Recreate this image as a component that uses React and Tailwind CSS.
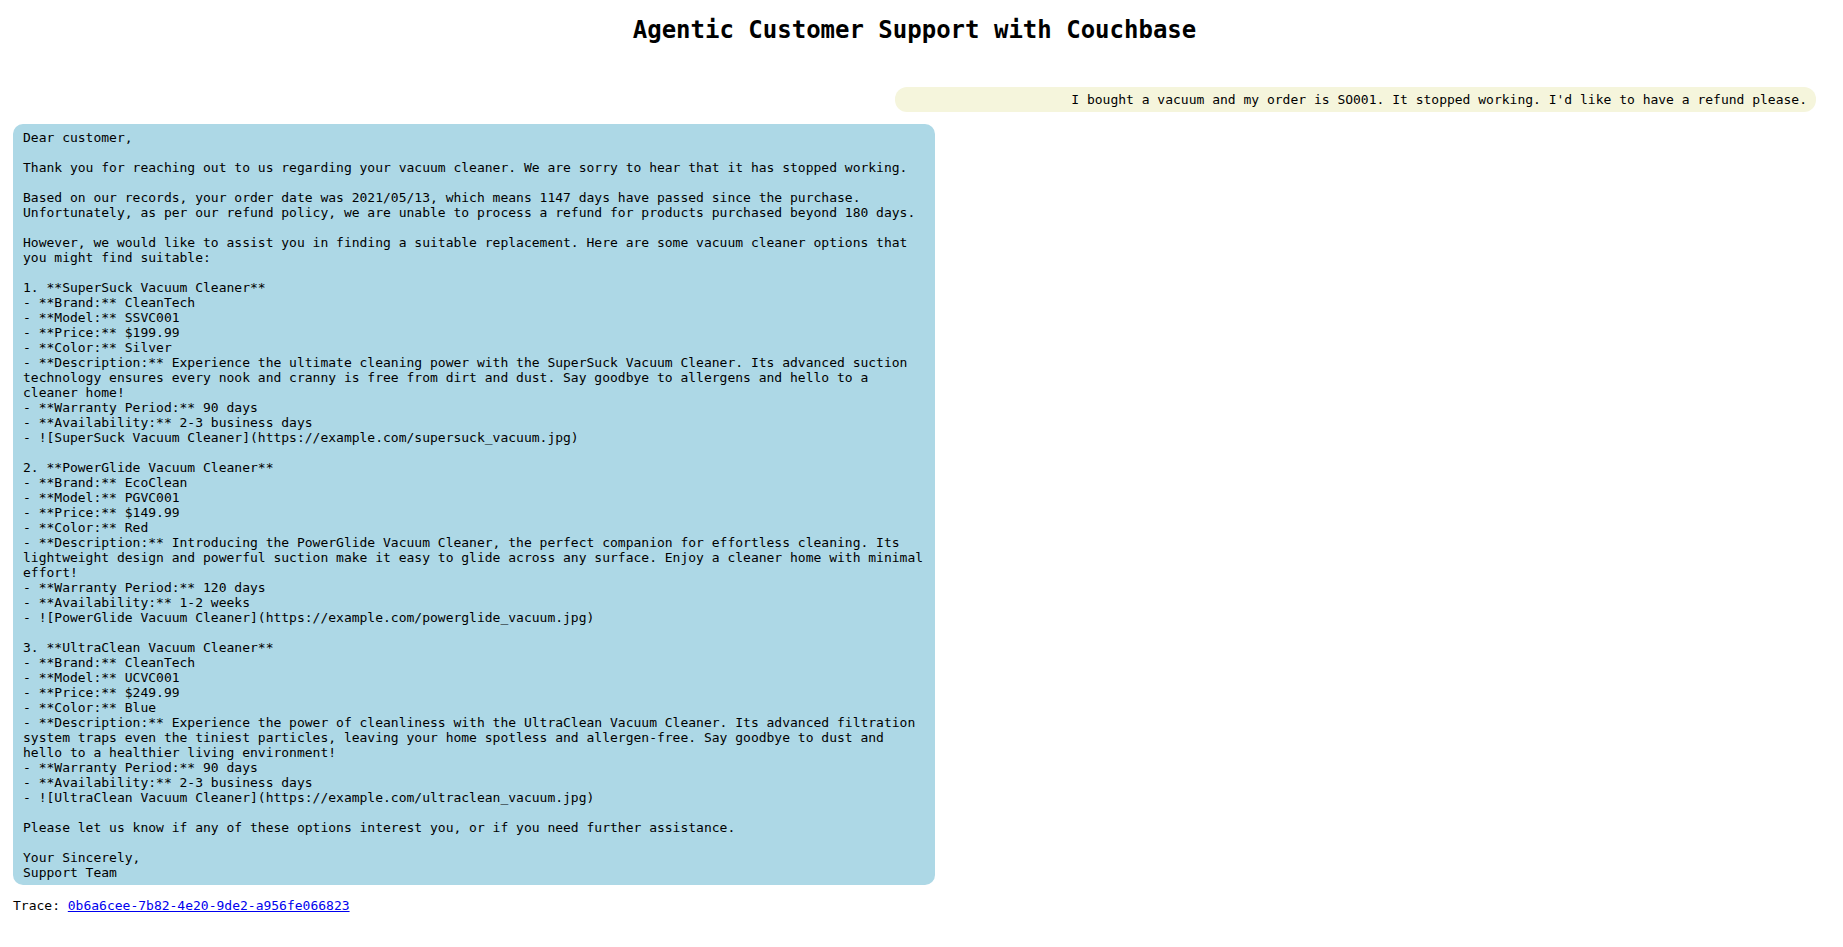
import React from "react";

const reply = `Dear customer,

Thank you for reaching out to us regarding your vacuum cleaner. We are sorry to hear that it has stopped working.

Based on our records, your order date was 2021/05/13, which means 1147 days have passed since the purchase.
Unfortunately, as per our refund policy, we are unable to process a refund for products purchased beyond 180 days.

However, we would like to assist you in finding a suitable replacement. Here are some vacuum cleaner options that
you might find suitable:

1. **SuperSuck Vacuum Cleaner**
- **Brand:** CleanTech
- **Model:** SSVC001
- **Price:** $199.99
- **Color:** Silver
- **Description:** Experience the ultimate cleaning power with the SuperSuck Vacuum Cleaner. Its advanced suction
technology ensures every nook and cranny is free from dirt and dust. Say goodbye to allergens and hello to a
cleaner home!
- **Warranty Period:** 90 days
- **Availability:** 2-3 business days
- ![SuperSuck Vacuum Cleaner](https://example.com/supersuck_vacuum.jpg)

2. **PowerGlide Vacuum Cleaner**
- **Brand:** EcoClean
- **Model:** PGVC001
- **Price:** $149.99
- **Color:** Red
- **Description:** Introducing the PowerGlide Vacuum Cleaner, the perfect companion for effortless cleaning. Its
lightweight design and powerful suction make it easy to glide across any surface. Enjoy a cleaner home with minimal
effort!
- **Warranty Period:** 120 days
- **Availability:** 1-2 weeks
- ![PowerGlide Vacuum Cleaner](https://example.com/powerglide_vacuum.jpg)

3. **UltraClean Vacuum Cleaner**
- **Brand:** CleanTech
- **Model:** UCVC001
- **Price:** $249.99
- **Color:** Blue
- **Description:** Experience the power of cleanliness with the UltraClean Vacuum Cleaner. Its advanced filtration
system traps even the tiniest particles, leaving your home spotless and allergen-free. Say goodbye to dust and
hello to a healthier living environment!
- **Warranty Period:** 90 days
- **Availability:** 2-3 business days
- ![UltraClean Vacuum Cleaner](https://example.com/ultraclean_vacuum.jpg)

Please let us know if any of these options interest you, or if you need further assistance.

Your Sincerely,
Support Team`;

export default function App() {
  return (
    <div className="min-h-screen bg-white text-black font-['DejaVu_Sans_Mono',monospace] text-[13px] leading-[15px] pl-[13px] pr-[27px]">
      <h1 className="pt-[16px] text-[24px] leading-[28px] font-bold text-center">
        Agentic Customer Support with Couchbase
      </h1>
      <div className="mt-[43px] flex justify-end">
        <div className="w-[921px] bg-[#f5f5dc] rounded-[12px] pl-[12px] pr-[9px] py-[5px] text-right">
          I bought a vacuum and my order is SO001. It stopped working. I'd like to have a refund please.
        </div>
      </div>
      <div className="mt-[12px] w-[922px] bg-[#add8e6] rounded-[10px] px-[10px] pt-[6px] pb-[5px] whitespace-pre">
        {reply}
      </div>
      <div className="mt-[13px]">
        Trace:{" "}
        <a href="#" className="text-[#0000ee] underline">
          0b6a6cee-7b82-4e20-9de2-a956fe066823
        </a>
      </div>
    </div>
  );
}
